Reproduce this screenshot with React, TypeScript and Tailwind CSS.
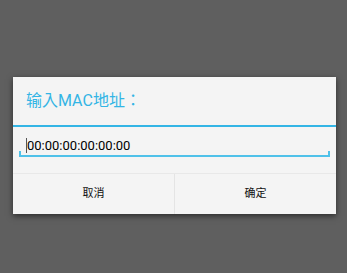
import React from "react";

export default function App() {
  return (
    <div className="w-[347px] h-[273px] bg-[#5f5f5f] pt-[77px] pl-[13px] font-['Roboto','Noto_Sans_CJK_SC',sans-serif]">
      <div className="w-[323px] bg-[#f4f4f4] shadow-[0_2px_6px_rgba(0,0,0,0.55)] flex flex-col">
        <div className="h-[50px] flex items-center pl-[13px] border-b-2 border-[#33b5e5]">
          <span className="text-[16px] text-[#33b5e5] leading-none font-['Roboto','Noto_Sans_CJK_JP',sans-serif]">输入MAC地址：</span>
        </div>
        <div className="h-[46px] px-[6px] pt-[8px]">
          <div className="relative h-[22px] flex items-center pl-[8px] border-b-2 border-[#4fc1e9]">
            <span className="absolute left-[7px] top-[3px] w-px h-[15px] bg-[#555]" />
            <span className="text-[13px] text-black leading-none">00:00:00:00:00:00</span>
            <span className="absolute left-0 bottom-0 w-[2px] h-[4px] bg-[#4fc1e9]" />
            <span className="absolute right-0 bottom-0 w-[2px] h-[4px] bg-[#4fc1e9]" />
          </div>
        </div>
        <div className="h-[41px] flex border-t border-[#e8e8e8]">
          <button className="flex-1 flex items-center justify-center text-[11px] text-[#111] border-r border-[#e4e4e4]">取消</button>
          <button className="flex-1 flex items-center justify-center text-[11px] text-[#111]">确定</button>
        </div>
      </div>
    </div>
  );
}
